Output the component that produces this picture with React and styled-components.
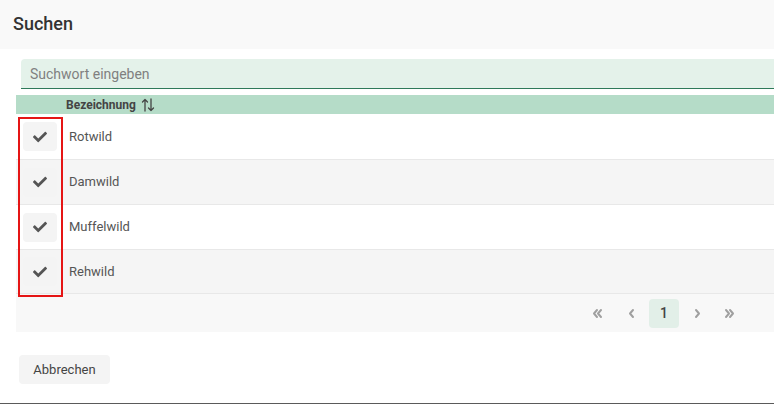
import React from "react";
import styled, { createGlobalStyle } from "styled-components";

const Global = createGlobalStyle`
  html, body { margin: 0; padding: 0; background: #fff; overflow: hidden; }
  body { font-family: Roboto, "Liberation Sans", Arial, sans-serif; }
  * { box-sizing: border-box; }
`;

const Page = styled.div`
  position: relative;
  width: 774px;
  height: 404px;
  overflow: hidden;
  border-bottom: 1px solid #5a5a5a;
  display: flex;
  flex-direction: column;
`;

const Header = styled.div`
  height: 49px;
  flex: none;
  background: #f9f9f9;
  display: flex;
  align-items: center;
  padding: 0 0 2px 13px;
  font-size: 18px;
  color: #333;
  font-weight: 500;
`;

const Body = styled.div`
  padding: 10px 0 0 16px;
  display: flex;
  flex-direction: column;
`;

const SearchInput = styled.input`
  margin-left: 5px;
  height: 30px;
  border: none;
  border-bottom: 1px solid #2e7a5a;
  border-top-left-radius: 4px;
  background: #e4f2ea;
  padding: 0 0 0 9px;
  font-family: inherit;
  font-size: 14px;
  color: #333;
  outline: none;
  width: calc(100% - 5px);
  caret-color: #333;
  &::placeholder { color: #808080; }
`;

const HeadRow = styled.div`
  margin-top: 6px;
  height: 19px;
  background: #b5dcc8;
  display: flex;
  align-items: center;
  padding-left: 50px;
  font-size: 12px;
  font-weight: 700;
  color: #444;
  gap: 5px;
`;

const Row = styled.div`
  height: ${(p) => p.$h}px;
  display: flex;
  align-items: center;
  background: ${(p) => (p.$alt ? "#f5f5f5" : "#fff")};
  border-bottom: 1px solid #e8e8e8;
`;

const CheckCell = styled.div`
  width: 53px;
  padding-left: 7px;
  flex: none;
`;

const CheckButton = styled.div`
  width: 34px;
  height: 29px;
  border-radius: 4px;
  background: #f4f4f4;
  display: flex;
  align-items: center;
  justify-content: center;
  color: #555;
`;

const Label = styled.div`
  font-size: 13px;
  color: #555;
  padding-bottom: 1px;
`;

const Pager = styled.div`
  height: 38px;
  background: #f8f8f8;
  display: flex;
  align-items: center;
  justify-content: flex-end;
  gap: 3px;
  padding-right: 29px;
`;

const PageBtn = styled.div`
  width: 30px;
  height: 29px;
  border-radius: 4px;
  display: flex;
  align-items: center;
  justify-content: center;
  background: ${(p) => (p.$active ? "#e2efe8" : "transparent")};
  color: ${(p) => (p.$active ? "#444" : "#a0a0a0")};
  font-size: 14px;
  font-weight: 500;
`;

const Footer = styled.div`
  padding: 23px 0 0 19px;
`;

const CancelButton = styled.button`
  width: 91px;
  height: 29px;
  border: none;
  border-radius: 4px;
  background: #f4f4f4;
  font-family: inherit;
  font-size: 13px;
  color: #444;
  padding: 0;
`;

const Highlight = styled.div`
  position: absolute;
  left: 18px;
  top: 117px;
  width: 45px;
  height: 180px;
  border: 2px solid #e51515;
  pointer-events: none;
`;

const Check = () => (
  <svg width="14" height="14" viewBox="0 0 512 512" fill="currentColor">
    <path d="M173.9 439.4l-166.4-166.4c-10-10-10-26.2 0-36.2l36.2-36.2c10-10 26.2-10 36.2 0L192 312.7 432.1 72.6c10-10 26.2-10 36.2 0l36.2 36.2c10 10 10 26.2 0 36.2l-294.4 294.4c-10 10-26.2 10-36.2 0z" />
  </svg>
);

const SortIcon = () => (
  <svg width="14" height="14" viewBox="0 0 14 14" fill="none" stroke="#444" strokeWidth="1.3" strokeLinecap="round" strokeLinejoin="round">
    <path d="M4 13V1.5M1.5 4L4 1.5 6.5 4" />
    <path d="M10 1V12.5M7.5 10L10 12.5 12.5 10" />
  </svg>
);

const Chev = ({ dir, double }) => {
  const l = dir === "left";
  const one = (x) => (l ? `M${x + 3} 2L${x} 5.5 ${x + 3} 9` : `M${x} 2L${x + 3} 5.5 ${x} 9`);
  return (
    <svg width={double ? 12 : 7} height="11" viewBox={double ? "0 0 12 11" : "0 0 7 11"} fill="none" stroke="currentColor" strokeWidth="2" strokeLinecap="round" strokeLinejoin="round">
      {double ? (
        <>
          <path d={one(2)} />
          <path d={one(6)} />
        </>
      ) : (
        <path d={one(2)} />
      )}
    </svg>
  );
};

const items = ["Rotwild", "Damwild", "Muffelwild", "Rehwild"];
const heights = [46, 45, 45, 44];

export default function App() {
  return (
    <>
      <Global />
      <Page>
        <Header>Suchen</Header>
        <Body>
          <SearchInput placeholder="Suchwort eingeben" autoFocus />
          <HeadRow>
            Bezeichnung <SortIcon />
          </HeadRow>
          {items.map((it, i) => (
            <Row key={it} $alt={i % 2 === 1} $h={heights[i]}>
              <CheckCell>
                <CheckButton>
                  <Check />
                </CheckButton>
              </CheckCell>
              <Label>{it}</Label>
            </Row>
          ))}
          <Pager>
            <PageBtn><Chev dir="left" double /></PageBtn>
            <PageBtn><Chev dir="left" /></PageBtn>
            <PageBtn $active>1</PageBtn>
            <PageBtn><Chev dir="right" /></PageBtn>
            <PageBtn><Chev dir="right" double /></PageBtn>
          </Pager>
        </Body>
        <Footer>
          <CancelButton>Abbrechen</CancelButton>
        </Footer>
        <Highlight />
      </Page>
    </>
  );
}
